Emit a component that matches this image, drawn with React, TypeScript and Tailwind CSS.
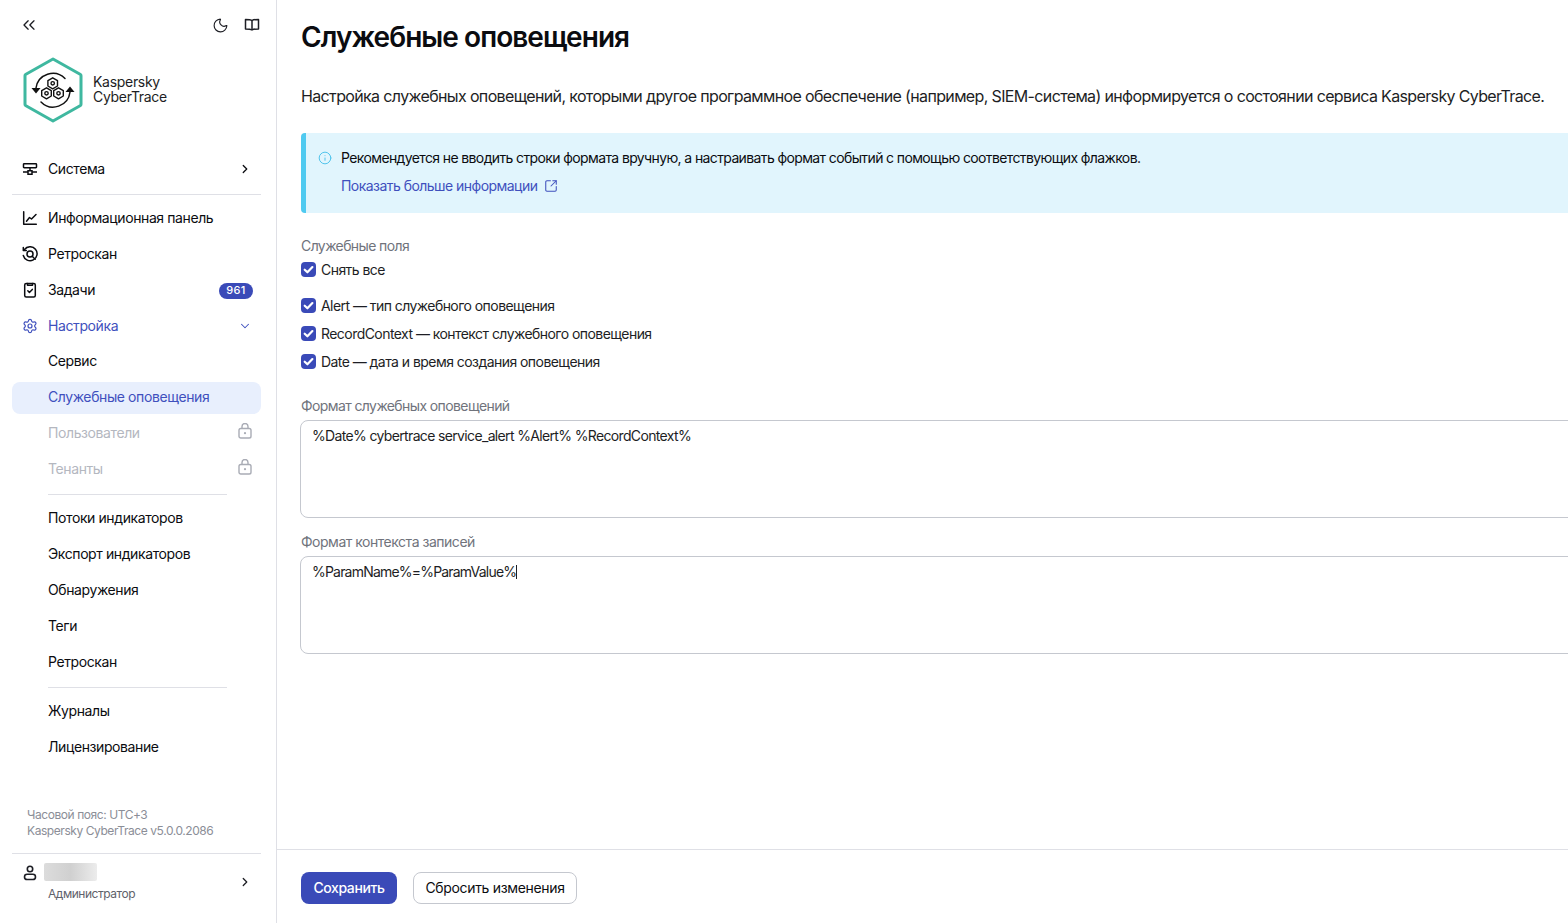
import React from 'react';
import { ChevronRight, ChevronDown, ChevronsLeft, Moon, Settings, Info, SquareArrowOutUpRight } from 'lucide-react';

const font = { fontFamily: 'Inter, "Noto Sans", sans-serif' };

const Book = () => (
  <svg width="16" height="16" viewBox="0 0 16 16" fill="none" stroke="currentColor" strokeWidth="1.5" strokeLinejoin="round">
    <path d="M8 3.5C7 2.8 5.5 2.500 1.500 2.500v9.500c4 0 5.500.3 6.500 1 1-.7 2.500-1 6.500-1V2.500c-4 0-5.500.3-6.500 1Z" />
    <path d="M8 3.500V13" />
  </svg>
);

const SystemIcon = () => (
  <svg width="16" height="16" viewBox="0 0 16 16" fill="none" stroke="currentColor" strokeWidth="1.500">
    <rect x="1.500" y="2.700" width="13" height="4" rx="0.700" />
    <path d="M8 6.700v3M1 11h5M10 11h5" />
    <path d="M6 9.700h4v3.600H6z" />
  </svg>
);

const ChartIcon = () => (
  <svg width="16" height="16" viewBox="0 0 16 16" fill="none" stroke="currentColor" strokeWidth="1.500" strokeLinecap="round" strokeLinejoin="round">
    <path d="M1.700 1.700v12.600h12.600" />
    <path d="M4.500 11.200 7.500 7.500l2 1.500 4.500-4.500" />
  </svg>
);

const RetroIcon = () => (
  <svg width="16" height="16" viewBox="0 0 16 16" fill="none" stroke="currentColor" strokeWidth="1.500" strokeLinecap="round" strokeLinejoin="round">
    <path d="M2.500 3.500A7 7 0 1 1 1.300 9.500" />
    <path d="M1.300 1.500v3h3" />
    <circle cx="8" cy="8" r="3" />
    <path d="m10.200 10.200 3 3" />
  </svg>
);

const TasksIcon = () => (
  <svg width="16" height="16" viewBox="0 0 16 16" fill="none" stroke="currentColor" strokeWidth="1.500" strokeLinecap="round" strokeLinejoin="round">
    <rect x="2.700" y="1.500" width="10.600" height="13.500" rx="1.500" />
    <path d="M5.500 1.500v1.800h5V1.500" />
    <path d="m5.800 8.800 1.600 1.600 2.900-3" />
  </svg>
);

const LockIcon = () => (
  <svg width="14" height="16" viewBox="0 0 14 16" fill="none" stroke="currentColor" strokeWidth="1.400">
    <rect x="1" y="5.500" width="12" height="9.500" rx="1.800" />
    <path d="M4 5.500V3.500a3 3 0 0 1 6 0v2" />
    <circle cx="7" cy="10.200" r="1.100" fill="currentColor" stroke="none" />
  </svg>
);

const UserIcon = () => (
  <svg width="16" height="16" viewBox="0 0 16 16" fill="none" stroke="currentColor" strokeWidth="1.600">
    <circle cx="8" cy="4" r="2.700" />
    <rect x="2.500" y="9.300" width="11" height="5.200" rx="2.600" />
  </svg>
);

const Nut = ({ x, y }: { x: number; y: number }) => (
  <g transform={`translate(${x} ${y})`}>
    <path d="M0-5.500 4.800-2.700v5.400L0 5.500-4.800 2.700v-5.400Z" fill="#fff" stroke="#111" strokeWidth="1.400" strokeLinejoin="round" />
    <circle r="1.700" fill="none" stroke="#111" strokeWidth="1.400" />
  </g>
);

const Logo = () => (
  <svg width="60" height="66" viewBox="0 0 60 66" fill="none" className="shrink-0">
    <path d="M30 2 57.500 17.500a1.500 1.500 0 0 1 .5 1.200v28.600a1.500 1.500 0 0 1-.5 1.200L30 64 2.500 48.500a1.500 1.500 0 0 1-.5-1.200V18.700a1.500 1.500 0 0 1 .5-1.200Z" stroke="#3fb8a0" strokeWidth="3" strokeLinejoin="round" />
    <path d="M42 21.500A17 17 0 0 0 13 31" stroke="#111" strokeWidth="1.500" strokeLinecap="round" />
    <path d="M18 45A17 17 0 0 0 47 35" stroke="#111" strokeWidth="1.500" strokeLinecap="round" />
    <path d="M8.500 31h9L13 36.500Z" fill="#111" />
    <path d="M42.500 35h9L47 29.500Z" fill="#111" />
    <Nut x={29.700} y={26.300} />
    <Nut x={23.500} y={36.300} />
    <Nut x={35.500} y={36.300} />
  </svg>
);

type RowProps = {
  icon?: React.ReactNode;
  label: string;
  right?: React.ReactNode;
  tone?: string;
  cls?: string;
};

const Row = ({ icon, label, right, tone = 'text-[#0b0c10]', cls = 'h-9' }: RowProps) => (
  <div className={`flex items-center pl-[22px] pr-[24px] text-[14px] tracking-[-0.4px] ${tone} ${cls}`}>
    <div className="w-[26px] shrink-0 flex items-center">{icon}</div>
    <span className="flex-1 whitespace-nowrap pb-px">{label}</span>
    {right}
  </div>
);

const Check = ({ label, cls }: { label: string; cls: string }) => (
  <div className={`flex items-center gap-[5px] text-[14px] tracking-[-0.55px] text-[#1d1e24] ${cls}`}>
    <svg width="15" height="15" viewBox="0 0 15 15" className="shrink-0 mt-px">
      <rect width="15" height="15" rx="4" fill="#3a4ab8" />
      <path d="m3.700 7.700 2.700 2.600 5-5.200" fill="none" stroke="#fff" strokeWidth="2.200" strokeLinecap="round" strokeLinejoin="round" />
    </svg>
    <span className="whitespace-nowrap">{label}</span>
  </div>
);

export default function App() {
  return (
    <div className="flex h-[923px] w-[1568px] overflow-hidden bg-white" style={font}>
      <aside className="w-[277px] shrink-0 border-r border-[#dfe0e6] flex flex-col">
        <div className="flex items-center justify-between h-[50px] pl-[19px] pr-[16px] text-[#1d1e24]">
          <ChevronsLeft size={20} strokeWidth={1.6} />
          <div className="flex items-center gap-[15px]">
            <Moon size={17} strokeWidth={1.6} />
            <Book />
          </div>
        </div>
        <div className="flex items-center gap-[10px] pl-[24px] h-[80px]">
          <div className="-ml-[1px]"><Logo /></div>
          <div className="text-[14px] leading-[15px] tracking-[-0.3px] text-[#1d1e24] -mt-[3px]">
            Kaspersky
            <br />
            CyberTrace
          </div>
        </div>
        <div className="h-[21px]" />
        <Row icon={<SystemIcon />} label="Система" right={<ChevronRight size={14} strokeWidth={2.200} />} />
        <div className="ml-[12px] mr-[15px] mt-[7px] mb-[5px] border-t border-[#dfe0e6]" />
        <Row icon={<ChartIcon />} label="Информационная панель" />
        <Row icon={<RetroIcon />} label="Ретроскан" />
        <Row
          icon={<TasksIcon />}
          label="Задачи"
          right={
            <span className="bg-[#3a4ab8] text-white rounded-full h-[16px] w-[34px] -mr-[1px] mt-[1px] flex items-center justify-center text-[11px] font-medium tracking-[0.3px]">
              961
            </span>
          }
        />
        <Row
          icon={<Settings size={16} strokeWidth={1.800} />}
          label="Настройка"
          tone="text-[#3f50bd]"
          cls="h-[35px]"
          right={<ChevronDown size={14} strokeWidth={1.8} />}
        />
        <Row label="Сервис" />
        <div className="h-9 flex items-start pt-[3px]">
          <div className="ml-[12px] mr-[15px] h-8 flex-1 rounded-[8px] bg-[#e8effd] flex items-center pl-[36px] pb-[3px] text-[14px] tracking-[-0.4px] text-[#3f50bd]">
            Служебные оповещения
          </div>
        </div>
        <Row label="Пользователи" tone="text-[#b4b7bf]" right={<span className="text-[#a9acb5] -mt-[5px]"><LockIcon /></span>} />
        <Row label="Тенанты" tone="text-[#b4b7bf]" right={<span className="text-[#a9acb5] -mt-[5px]"><LockIcon /></span>} />
        <div className="ml-[48px] mr-[49px] mt-[7px] mb-[5px] border-t border-[#dfe0e6]" />
        <Row label="Потоки индикаторов" />
        <Row label="Экспорт индикаторов" />
        <Row label="Обнаружения" />
        <Row label="Теги" />
        <Row label="Ретроскан" />
        <div className="ml-[48px] mr-[49px] mt-[7px] mb-[5px] border-t border-[#dfe0e6]" />
        <Row label="Журналы" />
        <Row label="Лицензирование" />
        <div className="flex-1" />
        <div className="pl-[27px] text-[12px] leading-[16px] tracking-[-0.43px] text-[#8b8e97] pb-[14px]">
          <div>Часовой пояс: UTC+3</div>
          <div>Kaspersky CyberTrace v5.0.0.2086</div>
        </div>
        <div className="ml-[12px] mr-[15px] border-t border-[#dfe0e6] h-[70px] relative flex">
          <div className="pl-[10px] pt-[11px] text-[#1d1e24]"><UserIcon /></div>
          <div className="pl-[6px] pt-[9px]">
            <div className="w-[53px] h-[18px] rounded-[2px] bg-gradient-to-r from-[#dcdcdc] via-[#d0d0d0] to-[#ececec]" />
            <div className="text-[12px] leading-[16px] tracking-[-0.46px] mt-[5px] ml-[4px] text-[#5f626b]">Администратор</div>
          </div>
          <div className="flex-1" />
          <div className="pr-[9px] pt-[21px] text-[#1d1e24]"><ChevronRight size={14} strokeWidth={2.200} /></div>
        </div>
      </aside>

      <main className="flex-1 min-w-0 flex flex-col relative">
        <div className="flex-1 pl-[24px] min-h-0 w-[1500px]">
          <h1 className="text-[28px] leading-[34px] tracking-[-0.95px] font-semibold text-[#0b0c10] mt-[20px] whitespace-nowrap">Служебные оповещения</h1>
          <p className="text-[16px] leading-[20px] tracking-[-0.64px] text-[#1d1e24] mt-[32px] whitespace-nowrap">
            Настройка служебных оповещений, которыми другое программное обеспечение (например, SIEM-система) информируется о состоянии сервиса Kaspersky CyberTrace.
          </p>
          <div className="mt-[27px] h-[80px] bg-[#e1f5fd] border-l-[5px] border-[#4fcaf0] rounded-l-[4px] pl-[12px] pt-[15px]">
            <div className="flex items-center gap-[9px] text-[14px] leading-[20px] tracking-[-0.62px] text-[#0b0c10]">
              <Info size={14} strokeWidth={1.700} className="text-[#4fc3ec]" />
              <span className="whitespace-nowrap">Рекомендуется не вводить строки формата вручную, а настраивать формат событий с помощью соответствующих флажков.</span>
            </div>
            <div className="flex items-center gap-[7px] mt-[8px] ml-[23px] text-[14px] leading-[20px] tracking-[-0.54px] text-[#3f50bd]">
              <span>Показать больше информации</span>
              <SquareArrowOutUpRight size={14} strokeWidth={1.800} />
            </div>
          </div>
          <div className="mt-[23px] text-[14px] leading-[20px] tracking-[-0.6px] text-[#70737c]">Служебные поля</div>
          <Check label="Снять все" cls="h-[28px] -mt-[1px]" />
          <div className="h-[8px]" />
          <Check label="Alert — тип служебного оповещения" cls="h-[28px]" />
          <Check label="RecordContext — контекст служебного оповещения" cls="h-[28px]" />
          <Check label="Date — дата и время создания оповещения" cls="h-[28px]" />
          <div className="mt-[21px] text-[14px] leading-[20px] tracking-[-0.6px] text-[#70737c]">Формат служебных оповещений</div>
          <div className="-ml-px mt-[4px] h-[98px] border border-[#c5c8cf] rounded-[8px] pl-[11px] py-[5px] text-[14px] leading-[20px] tracking-[-0.65px] text-[#1d1e24]">
            %Date% cybertrace service_alert %Alert% %RecordContext%
          </div>
          <div className="mt-[14px] text-[14px] leading-[20px] tracking-[-0.48px] text-[#70737c]">Формат контекста записей</div>
          <div className="-ml-px mt-[4px] h-[98px] border border-[#c5c8cf] rounded-[8px] pl-[11px] py-[5px] text-[14px] leading-[20px] tracking-[-0.8px] text-[#1d1e24]">
            %ParamName%=%ParamValue%<span className="inline-block w-px h-[14px] bg-[#1d1e24] align-[-2px]" />
          </div>
        </div>
        <div className="h-[74px] border-t border-[#dfe0e6] flex items-center gap-[16px] pl-[24px] pt-[3px] shrink-0">
          <div className="h-8 w-[96px] rounded-[8px] bg-[#3a4ab8] text-white text-[14px] tracking-[-0.4px] font-medium flex items-center justify-center pb-[2px]">Сохранить</div>
          <div className="h-8 w-[164px] rounded-[8px] border border-[#c5c8cf] text-[#0b0c10] text-[14px] tracking-[-0.33px] flex items-center justify-center pb-[2px]">Сбросить изменения</div>
        </div>
      </main>
    </div>
  );
}
